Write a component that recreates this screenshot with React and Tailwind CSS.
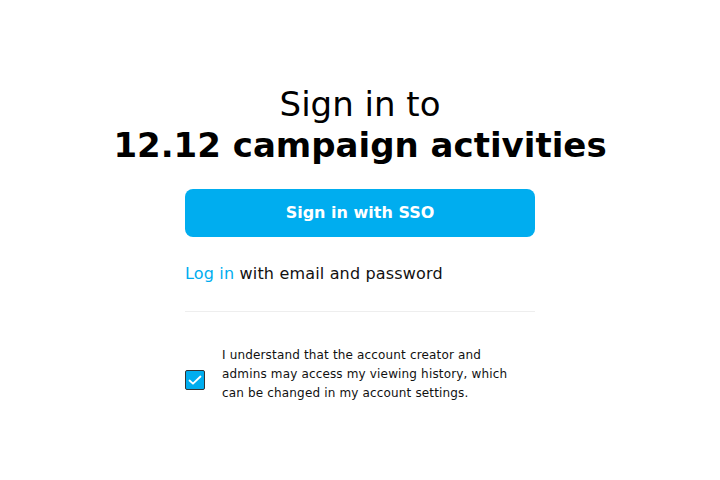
import React, { useState } from "react"

const Check = () => (
  <svg viewBox="0 0 16 16" className="w-4 h-4" fill="none">
    <path d="M2.5 8.5l3.5 3.2 7.5-7.2" stroke="white" strokeWidth="1.8" strokeLinecap="round" strokeLinejoin="round" />
  </svg>
)

const App = () => {
  const [agreed, setAgreed] = useState(true)

  return (
    <div className="min-h-screen bg-white text-black flex flex-col items-center pt-[84px]" style={{ fontFamily: '"DejaVu Sans", sans-serif' }}>
      {/* Heading */}
      <h1 className="text-center text-[34px] leading-[41px] text-black">
        <span className="block font-normal">Sign in to</span>
        <span className="block font-bold">12.12 campaign activities</span>
      </h1>

      <div className="w-[350px] flex flex-col">
        <button className="mt-[23px] h-12 w-full rounded-lg bg-[#00adef] text-white text-base font-bold">
          Sign in with SSO
        </button>

        <p className="mt-[25px] text-base leading-6 tracking-[0.17px] text-[#111]">
          <a className="text-[#00adef] cursor-pointer">Log in</a> with email and password
        </p>

        <div className="mt-[25px] h-px w-full bg-[#eeeeee]" />

        {/* Consent */}
        <div className="mt-[34px] flex items-start gap-[17px]">
          <button
            onClick={() => setAgreed(!agreed)}
            className="mt-6 w-5 h-5 shrink-0 rounded-[2px] border border-[#333] bg-[#00adef] flex items-center justify-center"
          >
            {agreed && <Check />}
          </button>
          <p className="w-[300px] text-xs leading-[19px] tracking-[0.16px] text-[#111]">
            I understand that the account creator and admins may access my viewing history, which can be changed in my account settings.
          </p>
        </div>
      </div>
    </div>
  )
}

export default App
